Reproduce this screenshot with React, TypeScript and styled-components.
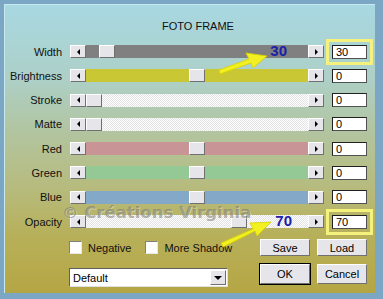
import React from 'react'
import styled, { createGlobalStyle } from 'styled-components'

const sliders = [
  { label: 'Width', track: '#808080', thumb: 13, value: '30', note: '30', noteRight: 21, mark: true },
  { label: 'Brightness', track: '#c9c834', thumb: 103, value: '0' },
  { label: 'Stroke', track: 'dither', thumb: 0, value: '0' },
  { label: 'Matte', track: 'dither', thumb: 0, value: '0' },
  { label: 'Red', track: '#c89496', thumb: 103, value: '0' },
  { label: 'Green', track: '#94c894', thumb: 103, value: '0' },
  { label: 'Blue', track: '#84a8c8', thumb: 103, value: '0' },
  { label: 'Opacity', track: 'dither', thumb: 145, value: '70', note: '70', noteRight: 16, mark: true },
]

export default function App() {
  return (
    <Frame>
      <Global />
      <Panel>
        <Title>FOTO FRAME</Title>
        <Rows>
          {sliders.map((s) => (
            <React.Fragment key={s.label}>
              <Label>{s.label}</Label>
              <Slider>
                <ArrowButton>
                  <Tri $dir="left" />
                </ArrowButton>
                <Track $color={s.track}>
                  <Thumb style={{ marginLeft: s.thumb }} />
                  {s.note && <Note $right={s.noteRight ?? 20}>{s.note}</Note>}
                </Track>
                <ArrowButton>
                  <Tri $dir="right" />
                </ArrowButton>
              </Slider>
              <ValueBox $mark={!!s.mark}>{s.value}</ValueBox>
            </React.Fragment>
          ))}
        </Rows>
        <Bottom>
          <LeftCol>
            <Checks>
              <CheckItem>
                <Box />
                Negative
              </CheckItem>
              <CheckItem>
                <Box />
                More Shadow
              </CheckItem>
            </Checks>
            <Select>
              <span>Default</span>
              <DropButton>
                <Tri $dir="down" />
              </DropButton>
            </Select>
          </LeftCol>
          <Buttons>
            <Button>Save</Button>
            <Button>Load</Button>
            <Button $default>OK</Button>
            <Button>Cancel</Button>
          </Buttons>
        </Bottom>
        <Watermark>© Créations Virginia</Watermark>
        <Arrows width="383" height="299" viewBox="0 0 383 299">
          <g fill="#f2f020" stroke="#d8d000" strokeWidth="0.8">
            <path d="M219 70 L249 59 L246 53 L267 56 L253 68 L251 63 L220 74 Z" />
            <path d="M221 243 L253 229 L250 223 L271 222 L257 236 L255 231 L223 247 Z" />
          </g>
        </Arrows>
      </Panel>
    </Frame>
  )
}

const Global = createGlobalStyle`
  * {
    box-sizing: border-box;
  }

  html, body, #root {
    margin: 0;
    padding: 0;
    width: 383px;
    height: 299px;
    overflow: hidden;
    font-family: 'Liberation Sans', Arial, sans-serif;
  }
`

const Frame = styled.div`
  width: 383px;
  height: 299px;
  background: #7ba7c4;
  padding: 4px 8px 6px 4px;
`

const Panel = styled.div`
  position: relative;
  height: 100%;
  padding: 15px 8px 0 4px;
  border-top: 1px solid #c8e8f0;
  border-left: 1px solid #c8e8f0;
  background: linear-gradient(180deg, #a8d8e2 0%, #add0c8 25%, #b2c49e 45%, #b6bc80 62%, #b7b05a 80%, #b5a644 100%);
`

const Title = styled.div`
  text-align: center;
  font-size: 11px;
  line-height: 13px;
  padding-left: 20px;
  color: #101010;
`

const Rows = styled.div`
  display: grid;
  grid-template-columns: 53px 254px 35px;
  grid-auto-rows: 13px;
  column-gap: 8px;
  row-gap: 11.3px;
  margin-top: 12px;
  align-items: center;
`

const Label = styled.div`
  text-align: right;
  font-size: 11px;
  color: #101010;
  white-space: nowrap;
`

const Slider = styled.div`
  display: flex;
  height: 13px;
`

const raised = `
  background: #e6e6ea;
  border-top: 1px solid #ffffff;
  border-left: 1px solid #ffffff;
  border-right: 1px solid #707070;
  border-bottom: 1px solid #707070;
`

const ArrowButton = styled.div`
  ${raised}
  width: 16px;
  height: 13px;
  display: flex;
  align-items: center;
  justify-content: center;
  flex: none;
`

const Tri = styled.span<{ $dir: 'left' | 'right' | 'down' }>`
  width: 0;
  height: 0;
  border-style: solid;
  ${(p) =>
    p.$dir === 'left'
      ? 'border-width: 3px 3px 3px 0; border-color: transparent #000 transparent transparent;'
      : p.$dir === 'right'
        ? 'border-width: 3px 0 3px 3px; border-color: transparent transparent transparent #000;'
        : 'border-width: 4px 4px 0 4px; border-color: #000 transparent transparent transparent;'}
`

const Track = styled.div<{ $color: string }>`
  position: relative;
  flex: 1;
  display: flex;
  background: ${(p) =>
    p.$color === 'dither'
      ? 'repeating-conic-gradient(#ffffff 0 25%, #e2e2e2 0 50%) 0 0 / 2px 2px'
      : p.$color};
`

const Thumb = styled.div`
  ${raised}
  width: 16px;
  height: 13px;
`

const Note = styled.span<{ $right: number }>`
  position: absolute;
  right: ${(p) => p.$right}px;
  top: -1px;
  font-size: 15px;
  font-weight: bold;
  line-height: 14px;
  color: #1a20a8;
`

const ValueBox = styled.div<{ $mark: boolean }>`
  height: 14px;
  background: #ffffff;
  border: 1px solid #202020;
  border-right-color: #505050;
  border-bottom-color: #505050;
  font-size: 11px;
  line-height: 12px;
  padding-left: 3px;
  color: #000;
  ${(p) => p.$mark && 'outline: 3px solid #f4f27c; outline-offset: 3px;'}
`

const Bottom = styled.div`
  display: flex;
  justify-content: space-between;
  margin-top: 11px;
  padding-left: 60px;
`

const LeftCol = styled.div`
  display: flex;
  flex-direction: column;
  padding-top: 2px;
  gap: 14px;
`

const Checks = styled.div`
  display: flex;
  gap: 14px;
  height: 13px;
  align-items: center;
`

const CheckItem = styled.label`
  display: flex;
  align-items: center;
  gap: 6px;
  font-size: 11px;
  color: #101010;
`

const Box = styled.span`
  width: 13px;
  height: 13px;
  background: #fff;
  border-top: 1px solid #808080;
  border-left: 1px solid #808080;
  border-right: 1px solid #e8e8e8;
  border-bottom: 1px solid #e8e8e8;
`

const Select = styled.div`
  width: 159px;
  height: 19px;
  background: #fff;
  border-top: 1px solid #606060;
  border-left: 1px solid #606060;
  border-right: 1px solid #e0e0e0;
  border-bottom: 1px solid #e0e0e0;
  display: flex;
  align-items: center;
  justify-content: space-between;
  padding: 1px 1px 1px 3px;
  font-size: 11px;
  color: #000;
`

const DropButton = styled.div`
  ${raised}
  width: 16px;
  height: 15px;
  display: flex;
  align-items: center;
  justify-content: center;
`

const Buttons = styled.div`
  display: grid;
  grid-template-columns: 50px 50px;
  grid-template-rows: 17px 20px;
  column-gap: 7px;
  row-gap: 8px;
`

const Button = styled.div<{ $default?: boolean }>`
  ${raised}
  display: flex;
  align-items: center;
  justify-content: center;
  font-size: 11px;
  color: #000;
  ${(p) => p.$default && 'outline: 1px solid #000;'}
`

const Watermark = styled.div`
  position: absolute;
  left: 57px;
  top: 198px;
  font-family: 'DejaVu Sans', sans-serif;
  font-size: 16.5px;
  font-weight: bold;
  color: rgba(120, 120, 110, 0.55);
  text-shadow: 1px 1px 0 rgba(255, 255, 255, 0.35);
  pointer-events: none;
  white-space: nowrap;
`

const Arrows = styled.svg`
  position: absolute;
  left: -5px;
  top: -5px;
  pointer-events: none;
`
